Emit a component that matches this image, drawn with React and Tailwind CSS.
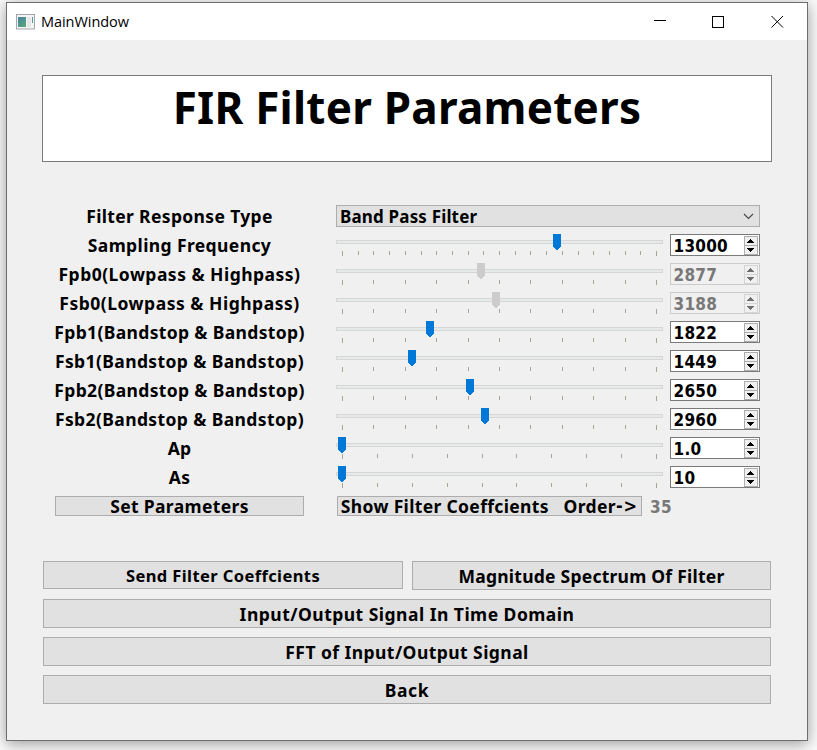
const FONT = 'font-["Noto_Sans",sans-serif] font-bold';
const DIGITS = 'font-["DejaVu_Sans_Condensed","DejaVu_Sans",sans-serif] font-bold [font-stretch:condensed]';

const WIDE_TICKS = [6, 37, 69, 100, 132, 163, 194, 226, 257, 289, 320];
const FINE_TICKS = [6, 22, 37, 53, 69, 85, 100, 116, 132, 147, 163, 179, 194, 210, 226, 242, 257, 273, 289, 304, 320];
const GAIN_TICKS = [6, 41, 76, 111, 146, 180, 215, 250, 285, 320];

const ROWS = [
  { label: 'Sampling Frequency', value: '13000', handle: 217, ticks: FINE_TICKS, track: 'tracking-[0.39px]' },
  { label: 'Fpb0(Lowpass & Highpass)', value: '2877', handle: 141, ticks: WIDE_TICKS, disabled: true, track: 'tracking-[0.48px]' },
  { label: 'Fsb0(Lowpass & Highpass)', value: '3188', handle: 156, ticks: WIDE_TICKS, disabled: true, track: 'tracking-[0.51px]' },
  { label: 'Fpb1(Bandstop & Bandstop)', value: '1822', handle: 90, ticks: WIDE_TICKS, track: 'tracking-[0.35px]' },
  { label: 'Fsb1(Bandstop & Bandstop)', value: '1449', handle: 72, ticks: WIDE_TICKS, track: 'tracking-[0.39px]' },
  { label: 'Fpb2(Bandstop & Bandstop)', value: '2650', handle: 130, ticks: WIDE_TICKS, track: 'tracking-[0.35px]' },
  { label: 'Fsb2(Bandstop & Bandstop)', value: '2960', handle: 145, ticks: WIDE_TICKS, track: 'tracking-[0.39px]' },
  { label: 'Ap', value: '1.0', handle: 2, ticks: GAIN_TICKS, track: 'tracking-[0.2px]' },
  { label: 'As', value: '10', handle: 2, ticks: GAIN_TICKS, track: 'tracking-[0.2px]' },
];

function Slider({ handle, ticks, disabled }) {
  return (
    <svg className="block h-[22px] w-[327px]" viewBox="0 0 327 22" shapeRendering="crispEdges">
      <rect x="0.5" y="6.5" width="326" height="3" fill="#e7eaea" stroke="#d6d6d6" />
      {ticks.map((x, i) => (
        <rect key={x} x={x} y="17" width="1" height={i === 0 || i === ticks.length - 1 ? 5 : 4} fill="#a6a597" />
      ))}
      <path
        d={`M${handle} 0h8v13h-1v1h-1v1h-1v1h-2v-1h-1v-1h-1v-1h-1z`}
        fill={disabled ? '#cccccc' : '#0078d7'}
      />
    </svg>
  );
}

function SpinBox({ value, disabled }) {
  return (
    <div className={`flex h-[22px] w-[90px] items-center justify-between border pl-[2.5px] pr-[1px] ${disabled ? 'border-[#cccccc] bg-[#f0f0f0] text-[#787878]' : 'border-[#7a7a7a] bg-white text-black'}`}>
      <span className={`${DIGITS} pt-[2px] text-[17px] leading-[20px] tracking-[0.25px]`}>{value}</span>
      <svg className="h-[19px] w-[14px]" viewBox="0 0 14 19" shapeRendering="crispEdges">
        <rect x="0.5" y="0.5" width="13" height="9" fill="#f0f0f0" stroke={disabled ? '#d4d4d4' : '#adadad'} />
        <rect x="0.5" y="9.5" width="13" height="9" fill="#f0f0f0" stroke={disabled ? '#d4d4d4' : '#adadad'} />
        <path d="M6 3h1v1h1v1h1v1h1v1h-7v-1h1v-1h1v-1h1zM3 12h7v1h-1v1h-1v1h-1v1h-1v-1h-1v-1h-1v-1h-1z" fill={disabled ? '#6d6d6d' : '#000'} />
      </svg>
    </div>
  );
}

function Button({ className, children }) {
  return (
    <button className={`flex items-center justify-center whitespace-pre border border-[#adadad] bg-[#e1e1e1] ${FONT} text-black ${className}`}>
      {children}
    </button>
  );
}

export default function App() {
  return (
    <div className="h-[750px] w-[817px] overflow-hidden bg-[#fafafa] pl-[6px] pt-[2px]">
      <div className="h-[739px] w-[802px] border border-[#6e6e6e] bg-[#f0f0f0] shadow-[0_3px_14px_rgba(0,0,0,0.38)]">
        <header className="flex h-[37px] items-center justify-between bg-white">
          <div className="flex items-center pl-[9px]">
            <svg className="h-[16px] w-[19px]" viewBox="0 0 19 16">
              <defs>
                <linearGradient id="pane" x1="0" y1="0" x2="0.6" y2="1">
                  <stop offset="0" stopColor="#4a7fa5" />
                  <stop offset="1" stopColor="#55a57c" />
                </linearGradient>
              </defs>
              <rect x="0.5" y="0.5" width="18" height="14.5" fill="#f4f4f4" stroke="#a3a7ad" />
              <rect x="2" y="3" width="8" height="10" fill="url(#pane)" />
              <rect x="11" y="3" width="4" height="10" fill="#e6e6e8" />
              <rect x="16" y="3" width="1" height="6" fill="#5597a0" />
            </svg>
            <span className='ml-[6px] font-["Open_Sans",sans-serif] text-[14.5px] leading-[20px] tracking-[-0.05px] text-black'>MainWindow</span>
          </div>
          <svg className="mr-[23px] h-[13px] w-[131px]" viewBox="0 0 131 13" fill="none" stroke="#000">
            <path d="M1 5.5h12" />
            <rect x="59.5" y="1.5" width="11" height="11" />
            <path d="M118.500 1l11.5 11.5M130 1L118.500 12.500" />
          </svg>
        </header>

        <main className="px-[35px] pt-[35px]">
          <div className="h-[87px] w-[730px] border border-[#7a7a7a] bg-white text-center">
            <h1 className={`${FONT} text-[44px] leading-[62px] tracking-[0.24px] text-black`}>FIR Filter Parameters</h1>
          </div>

          <section className="mt-[43px] flex flex-col gap-[7px] pl-[12px]">
            <div className="flex h-[22px]">
              <div className={`w-[251px] text-center ${FONT} whitespace-nowrap text-[17.5px] leading-[22px] tracking-[0.35px]`}>Filter Response Type</div>
              <div className="ml-[31px] flex h-[22px] w-[424px] items-center justify-between border border-[#adadad] bg-[#e1e1e1] pl-[3px] pr-[5px]">
                <span className={`${FONT} pt-[2px] text-[17px] leading-[20px] tracking-[0.17px]`}>Band Pass Filter</span>
                <svg className="h-[7px] w-[11px]" viewBox="0 0 11 7" fill="none" stroke="#444" strokeWidth="1.1">
                  <path d="M1 1l4.500 4.500L10 1" />
                </svg>
              </div>
            </div>
            {ROWS.map((row) => (
              <div key={row.label} className="flex h-[22px]">
                <div className={`w-[251px] text-center ${FONT} whitespace-nowrap text-[17.5px] leading-[22px] ${row.track}`}>{row.label}</div>
                <div className="ml-[31px] mr-[7px]">
                  <Slider {...row} />
                </div>
                <SpinBox {...row} />
              </div>
            ))}
            <div className="mt-px flex h-[20px] items-center pl-px">
              <Button className="h-[20px] w-[249px] text-[17.5px] leading-[18px] tracking-[0.36px]">Set Parameters</Button>
              <Button className="ml-[33px] h-[20px] w-[305px] text-[17.5px] leading-[18px] tracking-[0.34px]">
                <span>{'Show Filter Coeffcients   Order'}</span>
                <span className={`${DIGITS} text-[18px] tracking-[1px]`}>{'->'}</span>
              </Button>
              <span className={`${DIGITS} ml-[8px] pt-[2px] text-[17px] leading-[20px] tracking-[0.25px] text-[#787878]`}>35</span>
            </div>
          </section>

          <section className="mt-[45px] flex flex-col gap-[9px] pl-px">
            <div className="flex items-start gap-[9px]">
              <Button className="h-[28px] w-[360px] pt-[2px] text-[16.5px] tracking-[0.4px]">Send Filter Coeffcients</Button>
              <Button className="h-[29px] w-[359px] pt-[2px] text-[17.5px] tracking-[0.24px]">Magnitude Spectrum Of Filter</Button>
            </div>
            <Button className="h-[29px] w-[728px] pt-[2px] text-[17.5px] tracking-[0.48px]">Input/Output Signal In Time Domain</Button>
            <Button className="h-[29px] w-[728px] pt-[2px] text-[17.5px] tracking-[0.44px]">FFT of Input/Output Signal</Button>
            <Button className="h-[29px] w-[728px] pt-[2px] text-[17.5px] tracking-[0.6px]">Back</Button>
          </section>
        </main>
      </div>
    </div>
  );
}
